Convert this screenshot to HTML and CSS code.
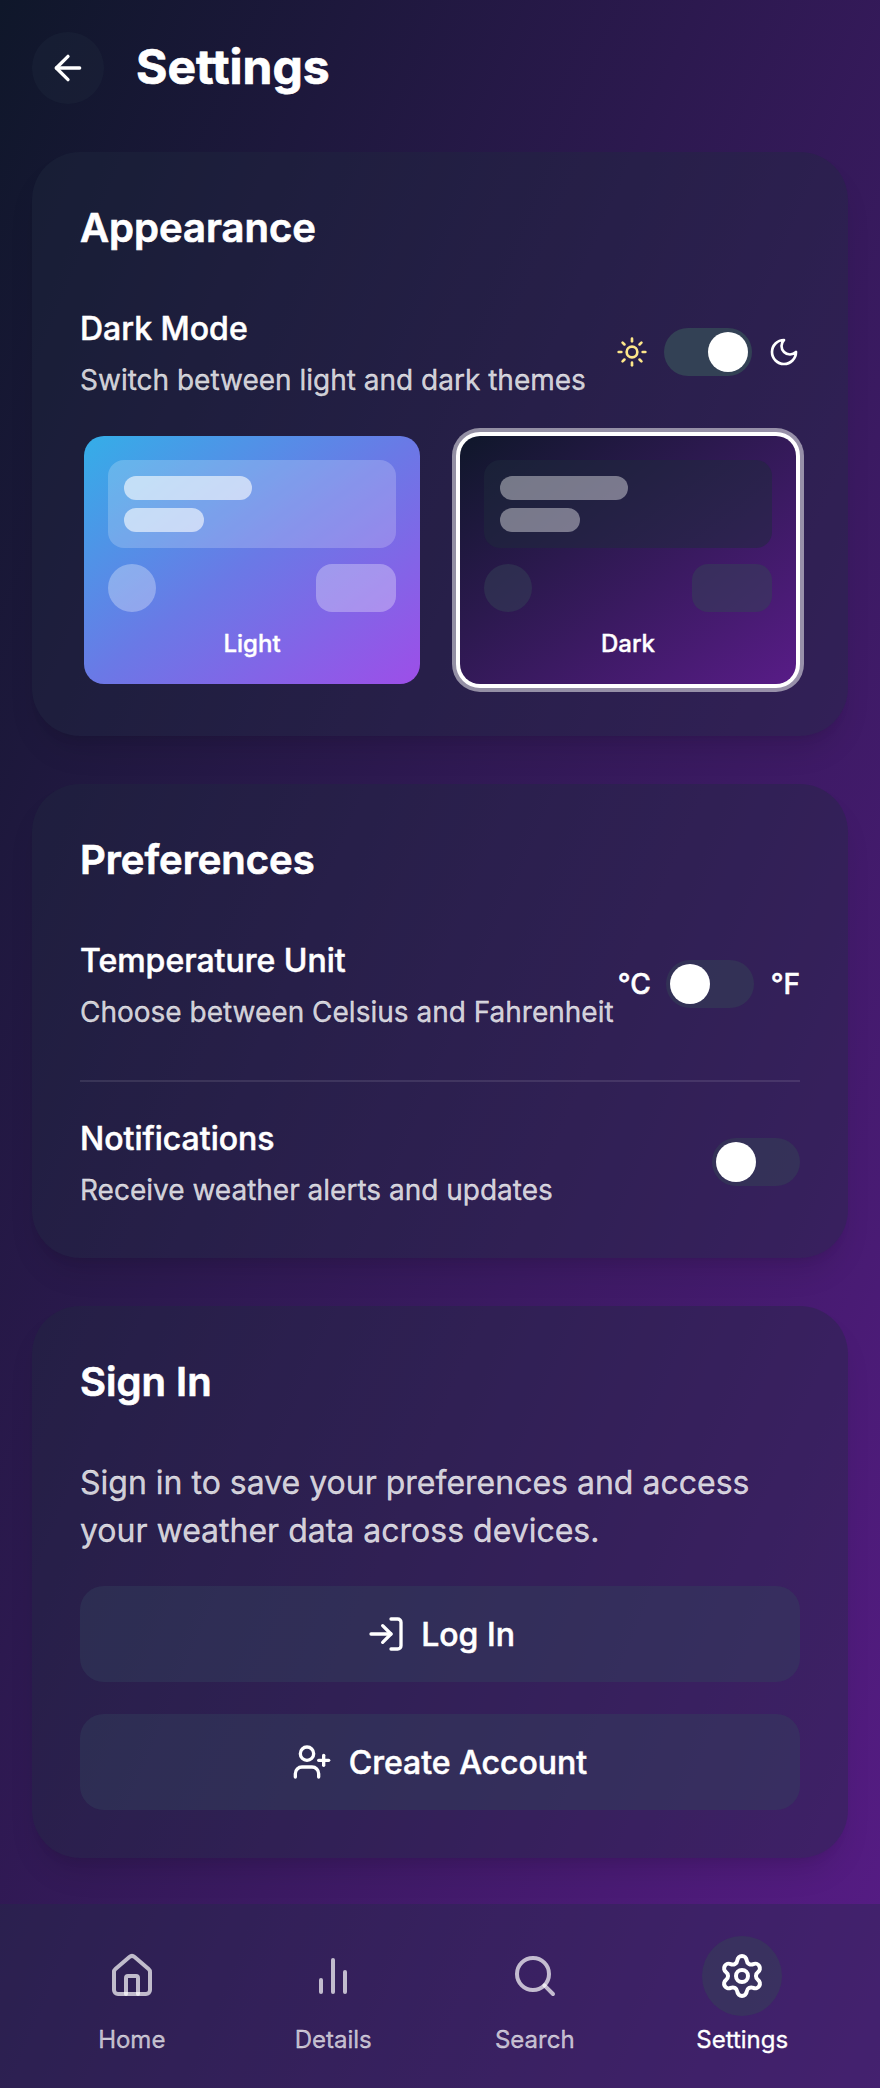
FILE: index.html
```html
<!DOCTYPE html>
<html lang="en">
<head>
<meta charset="utf-8">
<title>Settings</title>
<link rel="stylesheet" href="styles.css">
</head>
<body>
<div class="app">
  <main class="content">
    <header class="header">
      <button class="back" aria-label="Back">
        <svg class="icon icon-md" viewBox="0 0 24 24"><path d="m12 19-7-7 7-7"/><path d="M19 12H5"/></svg>
      </button>
      <h1 class="page-title">Settings</h1>
    </header>

    <section class="card">
      <h2 class="card-title">Appearance</h2>
      <div class="row">
        <div class="row-text">
          <h3 class="row-title">Dark Mode</h3>
          <p class="row-desc">Switch between light and dark themes</p>
        </div>
        <div class="control">
          <svg class="icon icon-sm sun" viewBox="0 0 24 24"><circle cx="12" cy="12" r="4"/><path d="M12 2v2"/><path d="M12 20v2"/><path d="m4.93 4.93 1.41 1.41"/><path d="m17.66 17.66 1.41 1.41"/><path d="M2 12h2"/><path d="M20 12h2"/><path d="m6.34 17.66-1.41 1.41"/><path d="m19.07 4.93-1.41 1.41"/></svg>
          <div class="toggle toggle-on"><span class="knob"></span></div>
          <svg class="icon icon-sm" viewBox="0 0 24 24"><path d="M12 3a6 6 0 0 0 9 9 9 9 0 1 1-9-9Z"/></svg>
        </div>
      </div>
      <div class="themes">
        <div class="theme theme-light">
          <div class="theme-body">
            <div class="theme-panel"><span class="bar bar-long"></span><span class="bar"></span></div>
            <div class="theme-shapes"><span class="dot"></span><span class="pill"></span></div>
            <p class="theme-name">Light</p>
          </div>
        </div>
        <div class="theme theme-dark theme-selected">
          <div class="theme-body">
            <div class="theme-panel"><span class="bar bar-long"></span><span class="bar"></span></div>
            <div class="theme-shapes"><span class="dot"></span><span class="pill"></span></div>
            <p class="theme-name">Dark</p>
          </div>
        </div>
      </div>
    </section>

    <section class="card">
      <h2 class="card-title">Preferences</h2>
      <div class="row">
        <div class="row-text">
          <h3 class="row-title">Temperature Unit</h3>
          <p class="row-desc">Choose between Celsius and Fahrenheit</p>
        </div>
        <div class="control">
          <span class="unit unit-c">°C</span>
          <div class="toggle"><span class="knob"></span></div>
          <span class="unit unit-f">°F</span>
        </div>
      </div>
      <div class="divider"></div>
      <div class="row">
        <div class="row-text">
          <h3 class="row-title">Notifications</h3>
          <p class="row-desc">Receive weather alerts and updates</p>
        </div>
        <div class="toggle"><span class="knob"></span></div>
      </div>
    </section>

    <section class="card">
      <h2 class="card-title">Sign In</h2>
      <p class="signin-text">Sign in to save your preferences and access your weather data across devices.</p>
      <div class="actions">
        <button class="action">
          <svg class="icon icon-md icon-login" viewBox="0 0 24 24"><path d="m10 17 5-5-5-5"/><path d="M15 12H3"/><path d="M15 3h4a2 2 0 0 1 2 2v14a2 2 0 0 1-2 2h-4"/></svg>
          <span class="action-label">Log In</span>
        </button>
        <button class="action">
          <svg class="icon icon-md icon-signup" viewBox="0 0 24 24"><path d="M16 21v-2a4 4 0 0 0-4-4H6a4 4 0 0 0-4 4v2"/><circle cx="9" cy="7" r="4"/><path d="M19 8v6"/><path d="M22 11h-6"/></svg>
          <span class="action-label">Create Account</span>
        </button>
      </div>
    </section>
  </main>

  <nav class="nav">
    <a class="nav-item">
      <span class="nav-icon"><svg class="icon icon-lg" viewBox="0 0 24 24"><path d="M15 21v-8a1 1 0 0 0-1-1h-4a1 1 0 0 0-1 1v8"/><path d="M3 10a2 2 0 0 1 .709-1.528l7-5.999a2 2 0 0 1 2.582 0l7 5.999A2 2 0 0 1 21 10v9a2 2 0 0 1-2 2H5a2 2 0 0 1-2-2z"/></svg></span>
      <span>Home</span>
    </a>
    <a class="nav-item">
      <span class="nav-icon"><svg class="icon icon-lg" viewBox="0 0 24 24"><path d="M18 20V10"/><path d="M12 20V4"/><path d="M6 20v-6"/></svg></span>
      <span>Details</span>
    </a>
    <a class="nav-item">
      <span class="nav-icon"><svg class="icon icon-lg" viewBox="0 0 24 24"><circle cx="11" cy="11" r="8"/><path d="m21 21-4.3-4.3"/></svg></span>
      <span>Search</span>
    </a>
    <a class="nav-item nav-active">
      <span class="nav-icon"><svg class="icon icon-lg" viewBox="0 0 24 24"><path d="M9.671 4.136a2.34 2.34 0 0 1 4.659 0 2.34 2.34 0 0 0 3.319 1.915 2.34 2.34 0 0 1 2.33 4.033 2.34 2.34 0 0 0 0 3.831 2.34 2.34 0 0 1-2.33 4.033 2.34 2.34 0 0 0-3.319 1.915 2.34 2.34 0 0 1-4.659 0 2.34 2.34 0 0 0-3.32-1.915 2.34 2.34 0 0 1-2.33-4.033 2.34 2.34 0 0 0 0-3.831A2.34 2.34 0 0 1 6.35 6.051a2.34 2.34 0 0 0 3.319-1.915"/><circle cx="12" cy="12" r="3"/></svg></span>
      <span>Settings</span>
    </a>
  </nav>
</div>
</body>
</html>
```
FILE: styles.css
```css
* { box-sizing: border-box; }

body, h1, h2, h3, p { margin: 0; }

body {
  font-family: Inter, "Liberation Sans", sans-serif;
  color: #fff;
}

button {
  border: 0;
  font: inherit;
  color: inherit;
}

.app {
  display: flex;
  flex-direction: column;
  justify-content: space-between;
  width: 880px;
  height: 2088px;
  background: linear-gradient(to bottom right, #0f172a, #581c87);
}

.content {
  display: flex;
  flex-direction: column;
  gap: 48px;
  padding: 32px 32px 0;
}

.header {
  display: flex;
  align-items: center;
  gap: 32px;
}

.back {
  display: flex;
  align-items: center;
  justify-content: center;
  width: 72px;
  height: 72px;
  padding: 0;
  border-radius: 50%;
  background: rgba(30, 41, 59, 0.4);
}

.page-title {
  padding-bottom: 3px;
  font-size: 48px;
  line-height: 64px;
  font-weight: 700;
  -webkit-text-stroke: 0.7px #fff;
}

.icon {
  display: block;
  flex: none;
  fill: none;
  stroke: currentColor;
  stroke-width: 2;
  stroke-linecap: round;
  stroke-linejoin: round;
}

.icon-sm { width: 32px; height: 32px; }
.icon-md { width: 40px; height: 40px; }
.icon-lg { width: 48px; height: 48px; }
.icon-login { margin: 0 -1px 0 1px; }
.icon-signup { margin: 0 1px 0 -1px; }
.sun { color: #fde68a; }

.card {
  padding: 48px;
  border-radius: 48px;
  background: rgba(32, 42, 62, 0.38);
  box-shadow: 0 20px 30px -6px rgba(0, 0, 0, 0.1), 0 8px 12px -8px rgba(0, 0, 0, 0.1);
}

.card-title {
  margin-bottom: 48px;
  font-size: 40px;
  line-height: 56px;
  font-weight: 600;
  -webkit-text-stroke: 0.7px #fff;
}

.row {
  display: flex;
  align-items: center;
  justify-content: space-between;
}

.row-text {
  display: flex;
  flex-direction: column;
  white-space: nowrap;
}

.row-title {
  padding: 1px 0 7px;
  font-size: 32px;
  line-height: 48px;
  font-weight: 500;
  -webkit-text-stroke: 0.5px #fff;
}

.row-desc {
  font-size: 28px;
  line-height: 40px;
  color: rgba(255, 255, 255, 0.8);
  -webkit-text-stroke: 0.3px rgba(255, 255, 255, 0.8);
}

.control {
  display: flex;
  align-items: center;
  gap: 16px;
}

.unit {
  font-size: 28px;
  line-height: 40px;
  font-weight: 500;
  -webkit-text-stroke: 0.5px #fff;
}

.unit-c { margin-right: -1px; }
.unit-f { margin-left: 1px; }

.toggle {
  display: flex;
  flex: none;
  width: 88px;
  height: 48px;
  padding: 4px;
  border-radius: 24px;
  background: rgba(51, 65, 85, 0.5);
}

.toggle-on {
  justify-content: flex-end;
  background: #334155;
}

.knob {
  width: 40px;
  height: 40px;
  border-radius: 50%;
  background: #fff;
}

.themes {
  display: grid;
  grid-template-columns: 1fr 1fr;
  gap: 32px;
  margin-top: 32px;
}

.theme {
  border: 4px solid transparent;
  border-radius: 24px;
}

.theme-selected {
  border-color: #fff;
  background: #fff;
  box-shadow: 0 0 0 4px rgba(255, 255, 255, 0.5);
}

.theme-body {
  padding: 24px;
  border-radius: 20px;
}

.theme-light .theme-body {
  background: linear-gradient(to bottom right, #34aee8, #6a79e6 50%, #9d4ee8);
}

.theme-dark .theme-body {
  background: linear-gradient(to bottom right, #0f172a, #581c87);
}

.theme-panel {
  display: flex;
  flex-direction: column;
  gap: 8px;
  padding: 16px;
  border-radius: 16px;
}

.theme-light .theme-panel { background: rgba(255, 255, 255, 0.2); }
.theme-dark .theme-panel { background: rgba(30, 41, 59, 0.5); }

.bar {
  width: 80px;
  height: 24px;
  border-radius: 12px;
}

.bar-long { width: 128px; }
.theme-light .bar { background: rgba(255, 255, 255, 0.6); }
.theme-dark .bar { background: rgba(255, 255, 255, 0.4); }

.theme-shapes {
  display: flex;
  justify-content: space-between;
  margin: 16px 0;
}

.dot {
  width: 48px;
  height: 48px;
  border-radius: 50%;
}

.pill {
  width: 80px;
  height: 48px;
  border-radius: 16px;
}

.theme-light .dot, .theme-light .pill { background: rgba(255, 255, 255, 0.3); }
.theme-dark .dot, .theme-dark .pill { background: rgba(51, 65, 85, 0.5); }

.theme-name {
  font-size: 24px;
  line-height: 32px;
  font-weight: 500;
  text-align: center;
  -webkit-text-stroke: 0.4px #fff;
}

.divider {
  height: 2px;
  margin: 48px 0 32px;
  background: rgba(255, 255, 255, 0.1);
}

.signin-text {
  padding: 1px 0 31px;
  font-size: 32px;
  line-height: 48px;
  color: rgba(255, 255, 255, 0.8);
  -webkit-text-stroke: 0.3px rgba(255, 255, 255, 0.8);
}

.actions {
  display: flex;
  flex-direction: column;
  gap: 32px;
}

.action {
  display: flex;
  align-items: center;
  justify-content: center;
  gap: 16px;
  height: 96px;
  border-radius: 24px;
  background: rgba(51, 65, 93, 0.43);
  font-size: 32px;
  line-height: 48px;
  font-weight: 500;
}

.action-label {
  padding-top: 2px;
  -webkit-text-stroke: 0.5px #fff;
}

.nav {
  display: flex;
  justify-content: space-around;
  padding: 32px 31px;
  background: rgba(34, 44, 68, 0.36);
}

.nav-item {
  display: flex;
  flex-direction: column;
  align-items: center;
  gap: 8px;
  font-size: 24px;
  line-height: 32px;
  color: rgba(255, 255, 255, 0.7);
  -webkit-text-stroke: 0.3px currentColor;
}

.nav-icon {
  display: flex;
  align-items: center;
  justify-content: center;
  width: 80px;
  height: 80px;
  border-radius: 50%;
}

.nav-active { color: #fff; }
.nav-active .nav-icon { background: rgba(51, 65, 85, 0.5); }
```
